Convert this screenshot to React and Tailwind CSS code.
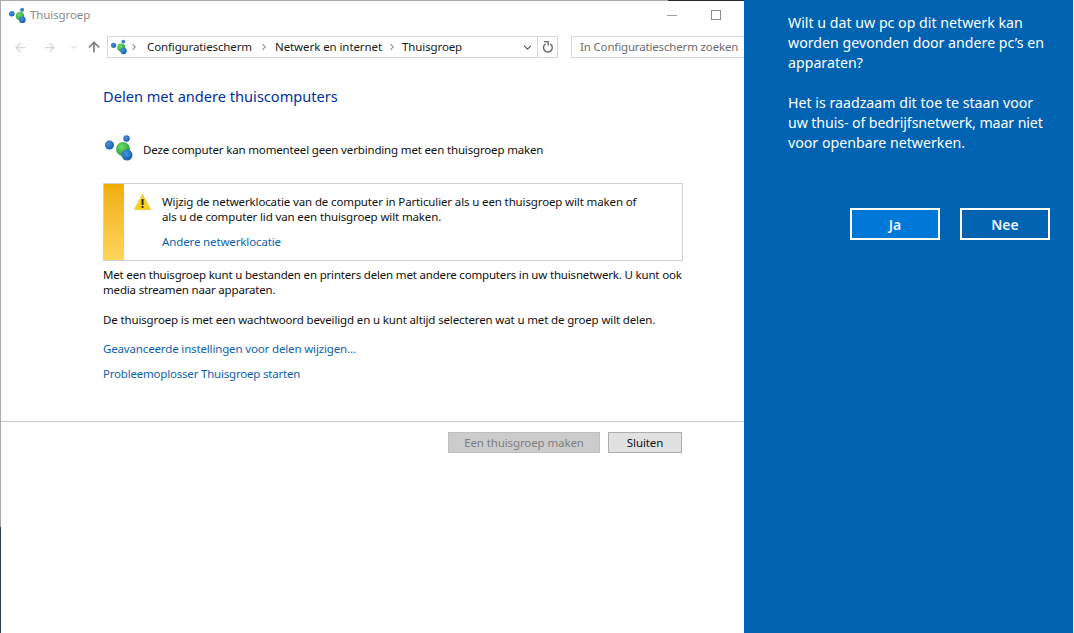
import React from "react";
import { ArrowLeft, ArrowRight, ArrowUp, ChevronDown, ChevronRight } from "lucide-react";

const font = { fontFamily: '"Noto Sans", "Open Sans", sans-serif' };

function HomeGroup({ size = 16 }) {
  return (
    <svg width={size} height={size} viewBox="0 0 28 26" className="shrink-0">
      <defs>
        <radialGradient id="hgGreen" cx="0.4" cy="0.35" r="0.7">
          <stop offset="0" stopColor="#6fdc6a" />
          <stop offset="1" stopColor="#1f9a3a" />
        </radialGradient>
        <radialGradient id="hgBlue" cx="0.4" cy="0.35" r="0.7">
          <stop offset="0" stopColor="#4a94dc" />
          <stop offset="1" stopColor="#0f5aa8" />
        </radialGradient>
      </defs>
      <circle cx="18" cy="14" r="7" fill="url(#hgGreen)" />
      <circle cx="21.5" cy="3.5" r="3.2" fill="url(#hgBlue)" />
      <circle cx="4.5" cy="10" r="4.5" fill="url(#hgBlue)" />
      <circle cx="22" cy="20" r="5.5" fill="url(#hgBlue)" />
    </svg>
  );
}

function Warn() {
  return (
    <svg width="17" height="16" viewBox="0 0 17 16" className="shrink-0">
      <path d="M8.5 0.5 L16.5 15.5 L0.5 15.5 Z" fill="#f9d21c" stroke="#e6b400" strokeWidth="0.6" />
      <rect x="7.6" y="5" width="1.9" height="6" fill="#222" />
      <rect x="7.6" y="12" width="1.9" height="1.9" fill="#222" />
    </svg>
  );
}

function Refresh() {
  return (
    <svg width="12" height="14" viewBox="0 0 12 14" fill="none" stroke="#6a6a6a" strokeWidth="1.4">
      <path d="M8.2 3.9 A4.4 4.4 0 1 1 3.6 3.9" />
      <path d="M2 1.6 H6.2 V5.4" />
    </svg>
  );
}

export default function App() {
  return (
    <div className="w-[1074px] h-[633px] flex overflow-hidden bg-white" style={font}>
      <div className="w-px flex flex-col shrink-0">
        <div className="h-[527px] bg-[#a9a9a9]" />
        <div className="flex-1 bg-[#2a3f47]" />
      </div>

      <div className="w-[743px] shrink-0 flex flex-col bg-white">
        <div className="flex h-px shrink-0">
          <div className="w-[667px] bg-[#a9a9a9]" />
          <div className="flex-1 bg-[#2b2b2b]" />
        </div>

        <div className="h-[29px] shrink-0 flex items-center pl-2 pb-[1px]">
          <HomeGroup size={17} />
          <span className="ml-[4px] text-[11.5px] text-[#8a8a8a] tracking-[-0.1px]">Thuisgroep</span>
          <div className="ml-auto flex items-center">
            <div className="w-[10px] h-px bg-[#9a9a9a] mt-[1px]" />
            <div className="ml-[34px] mr-[23px] w-[10px] h-[10px] border border-[#8a8a8a]" />
          </div>
        </div>

        <div className="h-[28px] shrink-0 flex items-center pl-[12px] mt-[3px]">
          <ArrowLeft size={15} strokeWidth={2} className="text-[#d6d6d6]" />
          <ArrowRight size={15} strokeWidth={2} className="text-[#d6d6d6] ml-[14px]" />
          <ChevronDown size={10} strokeWidth={2.5} className="text-[#dcdcdc] ml-[12px]" />
          <ArrowUp size={16} strokeWidth={2.5} className="text-[#7c7c7c] ml-[7px]" />
          <div className="ml-[5px] w-[451px] h-[22px] border border-[#d9d9d9] flex items-center pl-[3px]">
            <HomeGroup size={16} />
            <ChevronRight size={10} strokeWidth={2.5} className="text-[#777] ml-[2px]" />
            <span className="ml-[8px] text-[11.5px] text-[#1a1a1a] tracking-[-0.12px]">Configuratiescherm</span>
            <ChevronRight size={10} strokeWidth={2.5} className="text-[#777] ml-[7px]" />
            <span className="ml-[6px] text-[11.5px] text-[#1a1a1a] tracking-[-0.08px]">Netwerk en internet</span>
            <ChevronRight size={10} strokeWidth={2.5} className="text-[#777] ml-[5px]" />
            <span className="ml-[5px] text-[11.5px] text-[#1a1a1a] tracking-[-0.12px]">Thuisgroep</span>
            <ChevronDown size={13} strokeWidth={2} className="text-[#555] ml-auto mr-[2px]" />
            <div className="w-px h-full bg-[#d9d9d9] ml-[1px]" />
            <div className="w-[19px] flex justify-center">
              <Refresh />
            </div>
          </div>
          <div className="ml-[13px] flex-1 h-[22px] border border-[#d9d9d9] border-r-0 flex items-center pl-[8px]">
            <span className="text-[11.5px] text-[#6d6d6d] tracking-[-0.16px] whitespace-nowrap">In Configuratiescherm zoeken</span>
          </div>
        </div>

        <div className="w-[682px] pl-[102px] flex flex-col flex-1">
          <h1 className="mt-[23px] h-[24px] leading-[24px] text-[14.6px] text-[#003399] font-normal">
            Delen met andere thuiscomputers
          </h1>

          <div className="mt-[26px] h-[28px] flex items-center pl-[2px]">
            <HomeGroup size={28} />
            <span className="ml-[10px] mt-[3px] text-[11.5px] text-[#111] tracking-[-0.16px] whitespace-nowrap">
              Deze computer kan momenteel geen verbinding met een thuisgroep maken
            </span>
          </div>

          <div className="mt-[21px] h-[78px] border border-[#cfcfcf] flex">
            <div className="w-[20px] bg-gradient-to-b from-[#efae00] to-[#ffd558]" />
            <div className="pl-[10px] pt-[10px]">
              <Warn />
            </div>
            <div className="ml-[11px] pt-[10px] flex flex-col text-[11.5px] leading-[15px] text-[#111] tracking-[-0.13px] whitespace-nowrap">
              <span>Wijzig de netwerklocatie van de computer in Particulier als u een thuisgroep wilt maken of</span>
              <span>als u de computer lid van een thuisgroep wilt maken.</span>
              <span className="mt-[10px] text-[#0d62b0]">Andere netwerklocatie</span>
            </div>
          </div>

          <div className="mt-[6px] text-[11.5px] leading-[15px] text-[#111] whitespace-nowrap">
            <p className="tracking-[-0.18px]">Met een thuisgroep kunt u bestanden en printers delen met andere computers in uw thuisnetwerk. U kunt ook</p>
            <p className="tracking-[-0.18px]">media streamen naar apparaten.</p>
            <p className="mt-[15px] tracking-[-0.14px]">De thuisgroep is met een wachtwoord beveiligd en u kunt altijd selecteren wat u met de groep wilt delen.</p>
            <p className="mt-[14px] text-[#0d62b0] tracking-[-0.15px]">Geavanceerde instellingen voor delen wijzigen...</p>
            <p className="mt-[10px] text-[#0d62b0] tracking-[-0.2px]">Probleemoplosser Thuisgroep starten</p>
          </div>
        </div>

        <div className="h-px bg-[#c9c9c9] shrink-0" />
        <div className="h-[211px] shrink-0 w-[681px] pt-[10px] flex justify-end gap-[8px]">
          <div className="w-[152px] h-[21px] bg-[#cccccc] border border-[#bfbfbf] flex items-center justify-center text-[11.5px] text-[#7f7f7f] tracking-[-0.11px]">
            Een thuisgroep maken
          </div>
          <div className="w-[74px] h-[21px] bg-[#e1e1e1] border border-[#adadad] flex items-center justify-center text-[11.5px] text-[#111] tracking-[-0.11px]">
            Sluiten
          </div>
        </div>
      </div>

      <div className="w-[329px] shrink-0 bg-[#0063b1] text-white pl-[44px] pt-[13px]">
        <div className="text-[14.2px] leading-[20px] whitespace-nowrap">
          <p>Wilt u dat uw pc op dit netwerk kan</p>
          <p>worden gevonden door andere pc’s en</p>
          <p>apparaten?</p>
          <p className="mt-[20px]">Het is raadzaam dit toe te staan voor</p>
          <p className="tracking-[-0.1px]">uw thuis- of bedrijfsnetwerk, maar niet</p>
          <p>voor openbare netwerken.</p>
        </div>
        <div className="mt-[55px] ml-[62px] flex gap-[20px]">
          <div className="w-[90px] h-[32px] border-2 border-white bg-[#0078d7] flex items-center justify-center text-[14px] font-semibold text-[#e8f3fc]">
            Ja
          </div>
          <div className="w-[90px] h-[32px] border-2 border-white flex items-center justify-center text-[14px] font-semibold text-[#e8f3fc]">
            Nee
          </div>
        </div>
      </div>
    </div>
  );
}
